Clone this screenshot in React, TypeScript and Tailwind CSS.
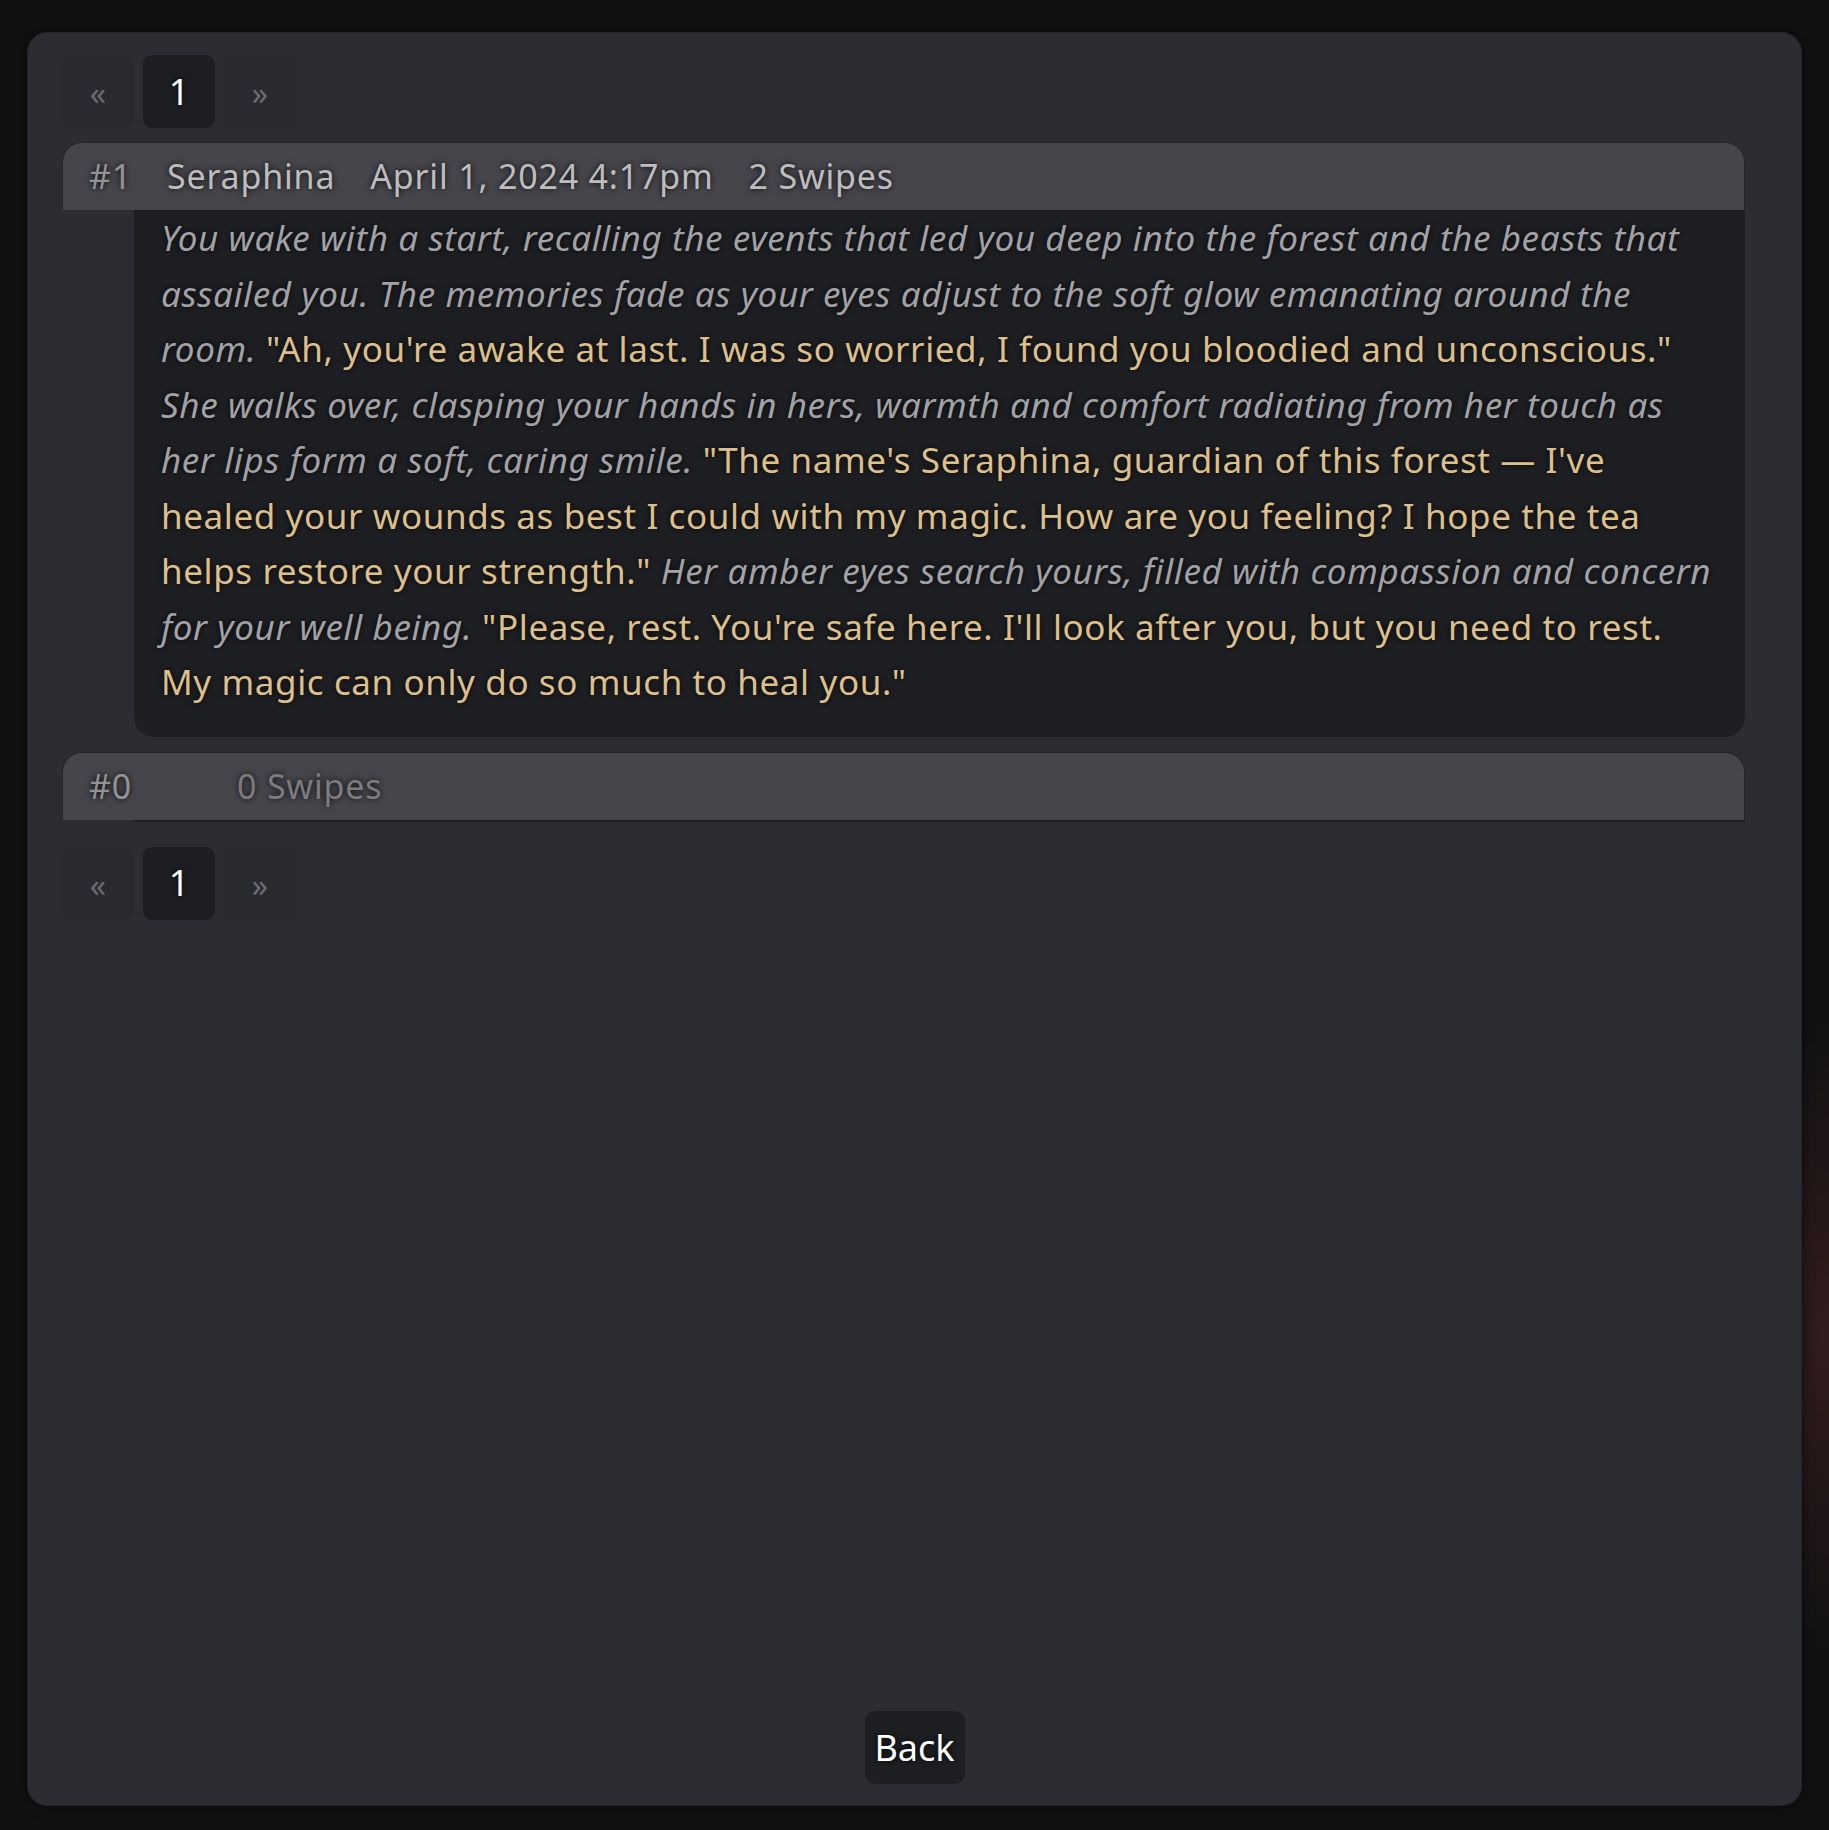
import React from "react";

type Part = { text: string; quote?: boolean };

const message: Part[] = [
  { text: "You wake with a start, recalling the events that led you deep into the forest and the beasts that assailed you. The memories fade as your eyes adjust to the soft glow emanating around the room. " },
  { text: "\"Ah, you're awake at last. I was so worried, I found you bloodied and unconscious.\"", quote: true },
  { text: " She walks over, clasping your hands in hers, warmth and comfort radiating from her touch as her lips form a soft, caring smile. " },
  { text: "\"The name's Seraphina, guardian of this forest — I've healed your wounds as best I could with my magic. How are you feeling? I hope the tea helps restore your strength.\"", quote: true },
  { text: " Her amber eyes search yours, filled with compassion and concern for your well being. " },
  { text: "\"Please, rest. You're safe here. I'll look after you, but you need to rest. My magic can only do so much to heal you.\"", quote: true },
];

const shadow = "[text-shadow:0_0_6px_rgba(0,0,0,0.9)]";

const Pagination = () => (
  <div className="flex gap-[9px]">
    <button className="w-[72px] h-[73px] rounded-[9px] bg-[#292a2f] text-[#6a6b6f] text-[32px] flex items-center justify-center pt-[3px]">
      «
    </button>
    <button className={`w-[72px] h-[73px] rounded-[9px] bg-[#1d1e21] text-white text-[36px] flex items-center justify-center ${shadow}`}>
      1
    </button>
    <button className="w-[72px] h-[73px] rounded-[9px] bg-[#292a2f] text-[#6a6b6f] text-[32px] flex items-center justify-center pt-[3px]">
      »
    </button>
  </div>
);

interface HeaderProps {
  id: string;
  name: string;
  date: string;
  swipes: string;
  dim?: boolean;
}

const MessageHeader = ({ id, name, date, swipes, dim }: HeaderProps) => (
  <div
    className={`h-[68px] rounded-t-[20px] bg-[#46454b] border-t border-x border-[#26262a] flex items-center gap-[35px] pl-[26px] text-[34px] tracking-[0.8px] ${shadow}`}
  >
    <span className="text-[#929295]">{id}</span>
    <span className="text-[#bdbdbf]">{name}</span>
    <span className="text-[#bdbdbf]">{date}</span>
    <span className={dim ? "text-[#7c7c80]" : "text-[#bdbdbf]"}>{swipes}</span>
  </div>
);

export default function App() {
  return (
    <div
      className="min-h-[1830px] w-full bg-[#111112] bg-[radial-gradient(ellipse_110px_320px_at_100%_73%,rgba(80,38,38,0.55),transparent)] pt-[32px] px-[27px] pb-[24px]"
      style={{ fontFamily: '"Noto Sans", "Open Sans", sans-serif' }}
    >
      <div className="h-[1774px] rounded-[20px] bg-[#2c2d32] border border-[#232327] shadow-[0_0_12px_rgba(0,0,0,0.6)] px-[34px] pt-[22px] pb-[21px] flex flex-col">
        <div className="pr-[22px]">
          <Pagination />

          <div className="mt-[14px]">
            <MessageHeader id="#1" name="Seraphina" date="April 1, 2024 4:17pm" swipes="2 Swipes" />
            <div className="ml-[72px] bg-[#1e1f23] rounded-b-[20px] pl-[27px] pr-[24px] pb-[27px] text-[35px] tracking-[0.6px] leading-[55.5px]">
              <p className={shadow}>
                {message.map((p, i) =>
                  p.quote ? (
                    <span key={i} className="text-[#dcbf8b]">
                      {p.text}
                    </span>
                  ) : (
                    <em key={i} className="text-[#a2a2a6] italic">
                      {p.text}
                    </em>
                  )
                )}
              </p>
            </div>
          </div>

          <div className="mt-[15px]">
            <MessageHeader id="#0" name="" date="" swipes="0 Swipes" dim />
            <div className="ml-[72px] h-[2px] bg-[#1e1f23]" />
          </div>

          <div className="mt-[25px]">
            <Pagination />
          </div>
        </div>

        <div className="mt-auto flex justify-center">
          <button className={`w-[100px] h-[73px] rounded-[10px] bg-[#1e1f22] text-white text-[36px] ${shadow}`}>
            Back
          </button>
        </div>
      </div>
    </div>
  );
}
